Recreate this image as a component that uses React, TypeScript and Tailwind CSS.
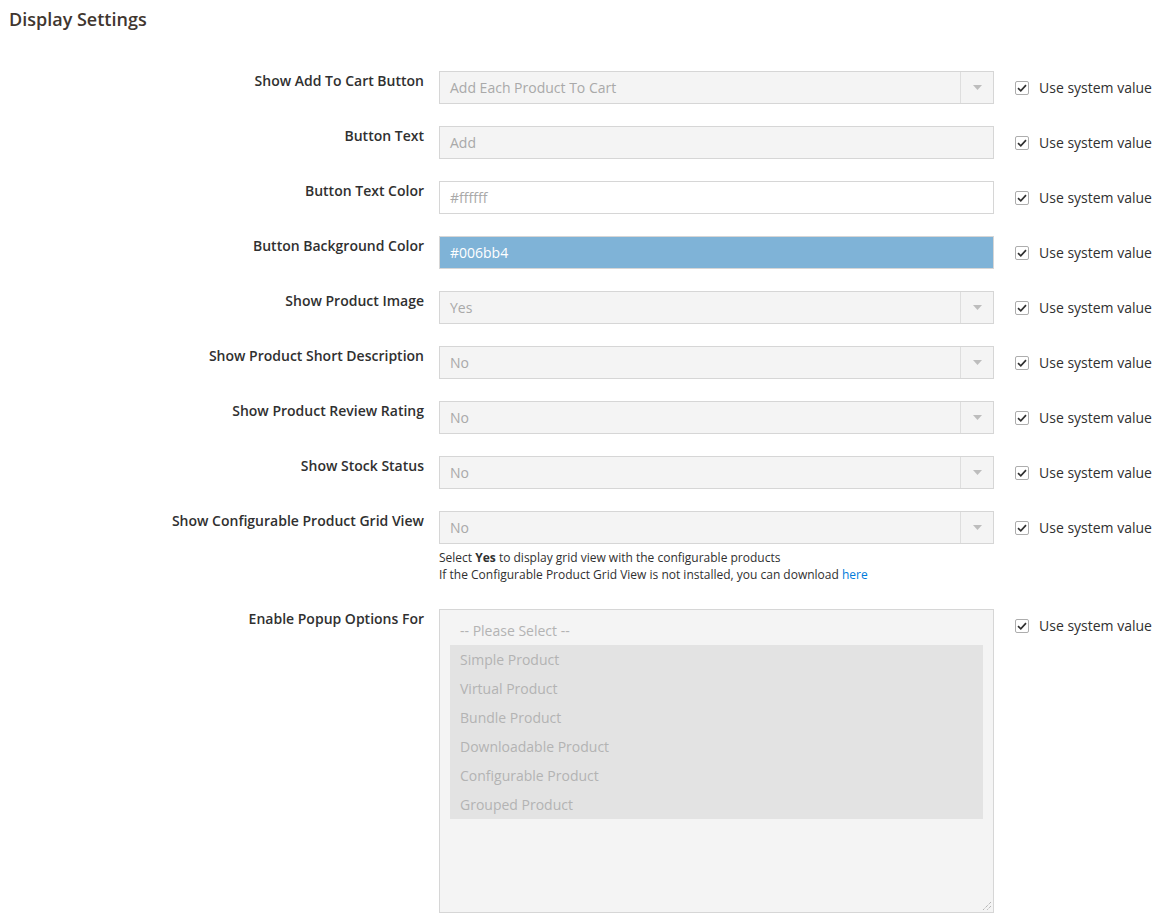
import React from "react";

const CheckMark = () => (
  <span className="w-[14px] h-[14px] border border-[#adadad] rounded-[2px] bg-white flex items-center justify-center shrink-0">
    <svg width="10" height="8" viewBox="0 0 10 8" fill="none">
      <path d="M1 4.2 L3.8 6.8 L9 1.2" stroke="#303030" strokeWidth="1.7" />
    </svg>
  </span>
);

const SystemValue = () => (
  <div className="flex items-center gap-[10px] h-[33px] pl-[21px]">
    <CheckMark />
    <span className="text-[14px] text-[#303030]">Use system value</span>
  </div>
);

const SelectBox = ({ value }: { value: string }) => (
  <div className="w-[555px] h-[33px] border border-[#d6d6d6] bg-[#f4f4f4] flex items-center text-[14px] text-[#a9a9a9]">
    <span className="flex-1 pl-[10px]">{value}</span>
    <span className="w-[33px] h-full border-l border-[#dedede] flex items-center justify-center">
      <svg width="9" height="5" viewBox="0 0 9 5">
        <path d="M0 0 H9 L4.5 5 Z" fill="#bdbdbd" />
      </svg>
    </span>
  </div>
);

const TextBox = ({ value, tone }: { value: string; tone: "grey" | "white" | "blue" }) => {
  const cls =
    tone === "grey"
      ? "bg-[#f4f4f4] text-[#a9a9a9]"
      : tone === "white"
      ? "bg-white text-[#a9a9a9]"
      : "bg-[#7fb3d7] text-white";
  return (
    <div className={`w-[555px] h-[33px] border border-[#d6d6d6] flex items-center pl-[10px] text-[14px] ${cls}`}>
      {value}
    </div>
  );
};

const Row = ({ label, children, help }: { label: string; children: React.ReactNode; help?: React.ReactNode }) => (
  <div className="flex items-start mb-[22px]">
    <div className="w-[424px] text-right text-[14px] font-semibold text-[#303030] leading-[19px]">{label}</div>
    <div className="ml-[15px] w-[555px]">
      {children}
      {help}
    </div>
    <SystemValue />
  </div>
);

const options = [
  "Simple Product",
  "Virtual Product",
  "Bundle Product",
  "Downloadable Product",
  "Configurable Product",
  "Grouped Product",
];

export default function App() {
  return (
    <div className="w-[1173px] h-[924px] bg-white font-['Open_Sans',sans-serif] overflow-hidden">
      <h2 className="pl-[9px] pt-[7px] text-[18px] leading-[24px] font-semibold text-[#41362f]">Display Settings</h2>

      <div className="pt-[40px]">
        <Row label="Show Add To Cart Button">
          <SelectBox value="Add Each Product To Cart" />
        </Row>
        <Row label="Button Text">
          <TextBox value="Add" tone="grey" />
        </Row>
        <Row label="Button Text Color">
          <TextBox value="#ffffff" tone="white" />
        </Row>
        <Row label="Button Background Color">
          <TextBox value="#006bb4" tone="blue" />
        </Row>
        <Row label="Show Product Image">
          <SelectBox value="Yes" />
        </Row>
        <Row label="Show Product Short Description">
          <SelectBox value="No" />
        </Row>
        <Row label="Show Product Review Rating">
          <SelectBox value="No" />
        </Row>
        <Row label="Show Stock Status">
          <SelectBox value="No" />
        </Row>
        <Row
          label="Show Configurable Product Grid View"
          help={
            <div className="pt-[5px] pb-[4px] text-[12px] leading-[17px] text-[#303030]">
              <div>
                Select <b>Yes</b> to display grid view with the configurable products
              </div>
              <div>
                If the Configurable Product Grid View is not installed, you can download{" "}
                <a className="text-[#007bdb]">here</a>
              </div>
            </div>
          }
        >
          <SelectBox value="No" />
        </Row>
        <Row label="Enable Popup Options For">
          <div className="relative w-[555px] h-[304px] border border-[#d6d6d6] bg-[#f4f4f4] pt-[6px] px-[10px] text-[14px] text-[#b3b3b3]">
            <div className="h-[29px] flex items-center pl-[10px]">-- Please Select --</div>
            {options.map((o) => (
              <div key={o} className="h-[29px] flex items-center pl-[10px] bg-[#e3e3e3]">
                {o}
              </div>
            ))}
            <svg className="absolute right-[1px] bottom-[1px]" width="10" height="10" viewBox="0 0 10 10">
              <path d="M9 1 L1 9 M9 5 L5 9" stroke="#9a9a9a" strokeWidth="1" strokeDasharray="1 1" />
            </svg>
          </div>
        </Row>
      </div>
    </div>
  );
}
